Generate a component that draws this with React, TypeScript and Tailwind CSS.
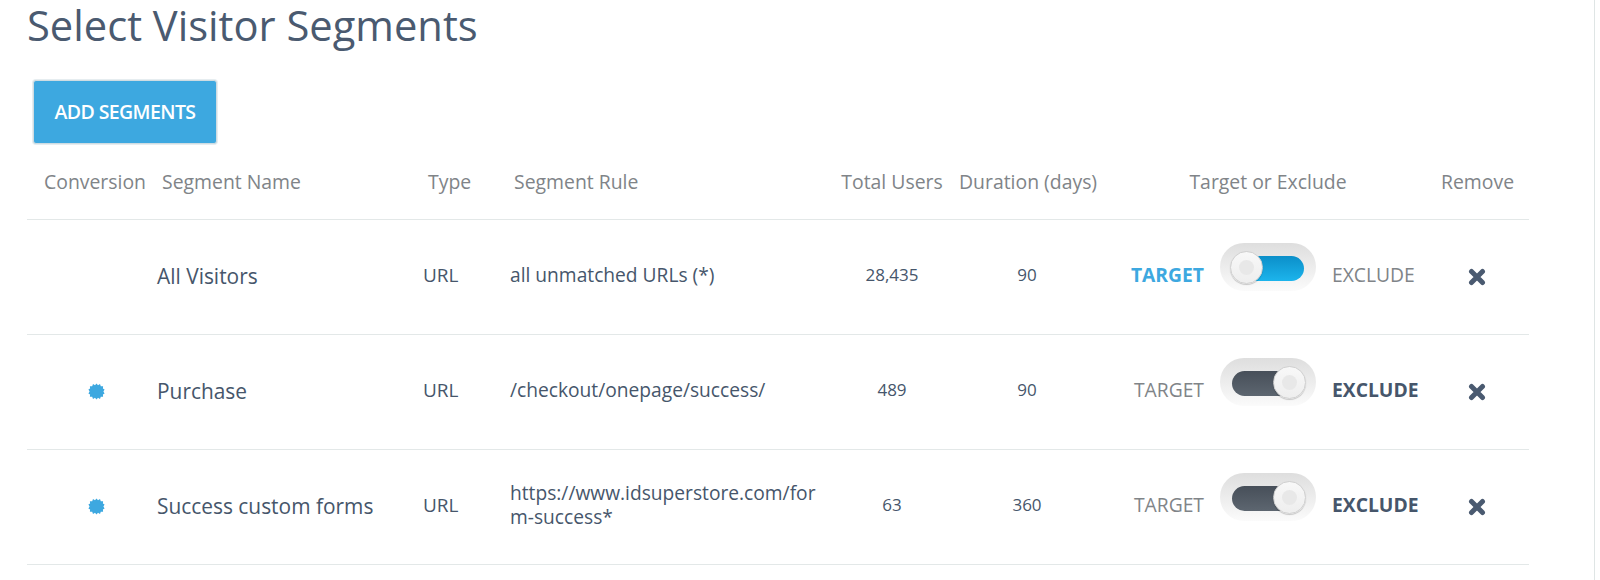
const GRID = "grid grid-cols-[130px_266px_87px_315px_134px_136px_346px_88px] items-center";

const Burst = () => (
  <svg width="17" height="17" viewBox="0 0 17 17" className="fill-[#3da8e0]">
    <polygon points="8.5,0.5 10,2.2 12,1.1 12.8,3.2 15.1,3.2 14.9,5.5 16.6,6.6 15.4,8.5 16.6,10.4 14.9,11.5 15.1,13.8 12.8,13.8 12,15.9 10,14.8 8.5,16.5 7,14.8 5,15.9 4.2,13.8 1.9,13.8 2.1,11.5 0.4,10.4 1.6,8.5 0.4,6.6 2.1,5.5 1.9,3.2 4.2,3.2 5,1.1 7,2.2" />
  </svg>
);

const Cross = () => (
  <svg width="18" height="18" viewBox="0 0 18 18">
    <path d="M3.5 3.5 L14.5 14.5 M14.5 3.5 L3.5 14.5" stroke="#4a5a70" strokeWidth="5" strokeLinecap="round" />
  </svg>
);

const Toggle = ({ on }: { on: boolean }) => (
  <div className="w-[96px] h-[48px] pt-[3px] rounded-full bg-gradient-to-b from-[#dedede] to-[#fbfbfb] flex items-center justify-center shrink-0">
    <div
      className={`relative w-[72px] h-[25px] rounded-full ${
        on
          ? "bg-gradient-to-b from-[#0b8fc9] to-[#1cb4ec]"
          : "bg-gradient-to-b from-[#474f59] to-[#5d6670]"
      }`}
    >
      <div
        className={`absolute top-[-5px] w-[33px] h-[33px] rounded-full bg-gradient-to-b from-[#f8f8f8] to-[#eeeeee] border border-[#d0d0d0] shadow-[0_1px_1px_rgba(0,0,0,0.2)] flex items-center justify-center ${
          on ? "left-[-2px]" : "right-[-2px]"
        }`}
      >
        <div className="w-[15px] h-[15px] rounded-full bg-[#e8e8e8]" />
      </div>
    </div>
  </div>
);

const Header = ({ children, className = "" }: { children: string; className?: string }) => (
  <div className={`text-[19.4px] text-[#808488] whitespace-nowrap ${className}`}>{children}</div>
);

const Row = ({
  conversion,
  name,
  rule,
  users,
  days,
  on,
}: {
  conversion: boolean;
  name: string;
  rule: string;
  users: string;
  days: string;
  on: boolean;
}) => (
  <div className={`${GRID} h-[115px] pb-[4px] border-b border-[#e3e8e8] text-[#46566b]`}>
    <div className="flex justify-center pl-[8px] mt-[2px]">{conversion && <Burst />}</div>
    <div className="text-[20.9px] mt-[4px]">{name}</div>
    <div className="text-[19px]">URL</div>
    <div className="text-[19.2px] leading-[24px] w-[310px] break-all">{rule}</div>
    <div className="text-[17px] text-center">{users}</div>
    <div className="text-[17px] text-center">{days}</div>
    <div className="flex items-center justify-center">
      <div className={`w-[110px] text-right text-[19.3px] ${on ? "font-bold text-[#3da8e0]" : "text-[#808488]"}`}>
        TARGET
      </div>
      <div className="mx-[16px] mb-[17px]">
        <Toggle on={on} />
      </div>
      <div className={`w-[110px] text-[19.3px] ${on ? "text-[#808488]" : "font-bold text-[#46566b]"}`}>
        EXCLUDE
      </div>
    </div>
    <div className="pl-[27px] flex mt-[4px]">
      <Cross />
    </div>
  </div>
);

export default function App() {
  return (
    <div className="h-[580px] w-[1600px] overflow-hidden bg-white font-['Open_Sans',sans-serif]">
      <div className="w-[1595px] h-full border-r border-[#dfe5e5] pl-[27px]">
        <div className="w-[1502px]">
          <h1 className="text-[41.7px] leading-[50px] text-[#4a5a70]">Select Visitor Segments</h1>
          <button className="mt-[30px] ml-[6px] h-[64px] w-[184px] rounded-[3px] bg-[#3da8e0] border border-[#cfdce2] shadow-[0_0_0_1px_#e6edf0] text-[19.5px] font-semibold text-white tracking-[-0.6px]">
            ADD SEGMENTS
          </button>
          <div className={`${GRID} h-[76px] border-b border-[#e3e8e8]`}>
            <Header className="pl-[17px]">Conversion</Header>
            <Header className="pl-[5px]">Segment Name</Header>
            <Header className="pl-[5px]">Type</Header>
            <Header className="pl-[4px]">Segment Rule</Header>
            <Header className="text-center">Total Users</Header>
            <Header className="text-center">Duration (days)</Header>
            <Header className="text-center">Target or Exclude</Header>
            <Header>Remove</Header>
          </div>
          <Row conversion={false} name="All Visitors" rule="all unmatched URLs (*)" users="28,435" days="90" on />
          <Row conversion name="Purchase" rule="/checkout/onepage/success/" users="489" days="90" on={false} />
          <Row conversion name="Success custom forms" rule="https://www.idsuperstore.com/form-success*" users="63" days="360" on={false} />
        </div>
      </div>
    </div>
  );
}
